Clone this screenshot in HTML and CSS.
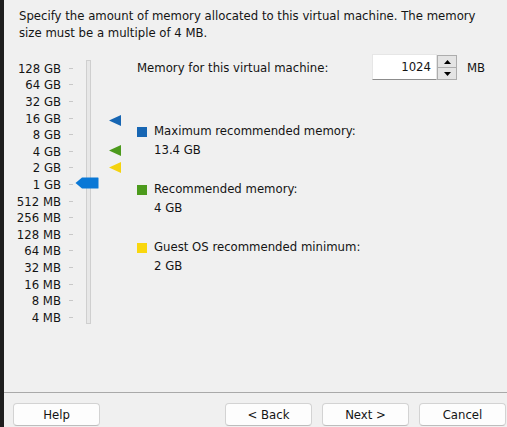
FILE: index.html
```html
<!DOCTYPE html>
<html>
<head>
<meta charset="utf-8">
<link rel="stylesheet" href="styles.css">
</head>
<body>
<div class="edge"></div>
<div class="main">
  <p class="desc">Specify the amount of memory allocated to this virtual machine. The memory<br>size must be a multiple of 4 MB.</p>
  <div class="body">
    <div class="slider">
      <div class="scale">
        <div class="row"><span class="lbl">128 GB</span><span class="tick"></span></div>
        <div class="row"><span class="lbl">64 GB</span><span class="tick"></span></div>
        <div class="row"><span class="lbl">32 GB</span><span class="tick"></span></div>
        <div class="row"><span class="lbl">16 GB</span><span class="tick"></span></div>
        <div class="row"><span class="lbl">8 GB</span><span class="tick"></span></div>
        <div class="row"><span class="lbl">4 GB</span><span class="tick"></span></div>
        <div class="row"><span class="lbl">2 GB</span><span class="tick"></span></div>
        <div class="row"><span class="lbl">1 GB</span><span class="tick"></span></div>
        <div class="row"><span class="lbl">512 MB</span><span class="tick"></span></div>
        <div class="row"><span class="lbl">256 MB</span><span class="tick"></span></div>
        <div class="row"><span class="lbl">128 MB</span><span class="tick"></span></div>
        <div class="row"><span class="lbl">64 MB</span><span class="tick"></span></div>
        <div class="row"><span class="lbl">32 MB</span><span class="tick"></span></div>
        <div class="row"><span class="lbl">16 MB</span><span class="tick"></span></div>
        <div class="row"><span class="lbl">8 MB</span><span class="tick"></span></div>
        <div class="row"><span class="lbl">4 MB</span><span class="tick"></span></div>
      </div>
      <div class="track"></div>
      <svg class="thumb" style="top:117px" width="24" height="12" viewBox="0 0 24 12"><path d="M0.5 6 L7 0.5 H23 Q23.5 0.5 23.5 1 V11 Q23.5 11.5 23 11.5 H7 Z" fill="#0a78d6"/></svg>
      <svg class="marker" style="top:55px" width="12" height="11" viewBox="0 0 12 11"><path d="M0 5.5 L12 0 V11 Z" fill="#1766b3"/></svg>
      <svg class="marker" style="top:85px" width="12" height="11" viewBox="0 0 12 11"><path d="M0 5.5 L12 0 V11 Z" fill="#4c9a1c"/></svg>
      <svg class="marker" style="top:102px" width="12" height="11" viewBox="0 0 12 11"><path d="M0 5.5 L12 0 V11 Z" fill="#f4d30f"/></svg>
    </div>
    <div class="info">
      <div class="memrow">
        <span class="memlabel">Memory for this virtual machine:</span>
        <div class="field">1024</div>
        <div class="spin">
          <div class="spinbtn"><svg width="7" height="4" viewBox="0 0 7 4"><path d="M0 4 L3.5 0 L7 4 Z" fill="#000"/></svg></div>
          <div class="spinbtn"><svg width="7" height="4" viewBox="0 0 7 4"><path d="M0 0 L3.5 4 L7 0 Z" fill="#000"/></svg></div>
        </div>
        <span class="unit">MB</span>
      </div>
      <div class="legend">
        <div class="group">
          <div class="gline"><span class="sq sq-blue"></span><span>Maximum recommended memory:</span></div>
          <div class="gval">13.4 GB</div>
        </div>
        <div class="group">
          <div class="gline"><span class="sq sq-green"></span><span>Recommended memory:</span></div>
          <div class="gval">4 GB</div>
        </div>
        <div class="group">
          <div class="gline"><span class="sq sq-yellow"></span><span>Guest OS recommended minimum:</span></div>
          <div class="gval">2 GB</div>
        </div>
      </div>
    </div>
  </div>
  <div class="footer">
    <div class="sep"></div>
    <div class="buttons">
      <div class="btn">Help</div>
      <div class="right">
        <div class="btn">&lt; Back</div>
        <div class="btn">Next &gt;</div>
        <div class="btn">Cancel</div>
      </div>
    </div>
  </div>
</div>
</body>
</html>
```
FILE: styles.css
```css
* { box-sizing: border-box; }
html, body { margin: 0; padding: 0; height: 100%; }
body {
  display: flex;
  background: #f0f0f0;
  font-family: "DejaVu Sans Condensed", "DejaVu Sans", sans-serif;
  font-stretch: condensed;
  font-size: 13px;
  color: #141414;
  overflow: hidden;
}
.edge { width: 4px; background: #1e1e1e; flex: none; }
.main { flex: 1; display: flex; flex-direction: column; min-width: 0; }
.desc { margin: 0; padding: 7px 0 0 15px; line-height: 17px; }
.body { display: flex; padding-top: 13px; }
.slider { position: relative; width: 133px; height: 266px; margin-top: 6px; display: flex; flex: none; }
.scale { display: flex; flex-direction: column; }
.row { display: flex; align-items: center; height: 16.6px; }
.lbl { width: 57px; text-align: right; white-space: nowrap; }
.tick { width: 4px; height: 1px; margin-left: 8px; background: #c8c8c8; }
.track { width: 5px; height: 264px; margin-left: 13px; border: 1px solid #cfcfcf; background: #e7e7e7; }
.thumb { position: absolute; left: 71px; }
.marker { position: absolute; left: 105px; }
.info { display: flex; flex-direction: column; }
.memrow { display: flex; align-items: center; height: 26px; }
.memlabel { width: 235px; white-space: nowrap; }
.field {
  width: 65px; height: 26px; background: #fff;
  border: 1px solid #e6e6e6; border-bottom: 1px solid #8c8c8c;
  text-align: right; padding-right: 5px; line-height: 23px;
}
.spin { width: 20px; height: 25px; display: flex; flex-direction: column; border: 1px solid #adadad; background: #e4e4e4; align-self: flex-start; margin-top: 1px; }
.spinbtn { flex: 1; display: flex; align-items: center; justify-content: center; }
.spinbtn + .spinbtn { border-top: 1px solid #adadad; }
.unit { margin-left: 10px; }
.legend { display: flex; flex-direction: column; gap: 20px; margin-top: 41px; line-height: 19px; }
.gline { display: flex; align-items: flex-start; gap: 7px; }
.sq { width: 10px; height: 10px; margin-top: 6px; flex: none; }
.sq-blue { background: #1766b3; }
.sq-green { background: #4c9a1c; }
.sq-yellow { background: #f9d70e; }
.gval { padding-left: 17px; }
.footer { margin-top: auto; }
.sep { height: 1px; background: #a9a9a9; }
.buttons { display: flex; padding: 10px 1px 1px 9px; }
.right { display: flex; gap: 10px; margin-left: auto; }
.btn {
  width: 87px; height: 23px; background: #fdfdfd;
  border: 1px solid #d3d3d3; border-bottom-color: #bdbdbd; border-radius: 4px;
  text-align: center; line-height: 21px;
}
```
